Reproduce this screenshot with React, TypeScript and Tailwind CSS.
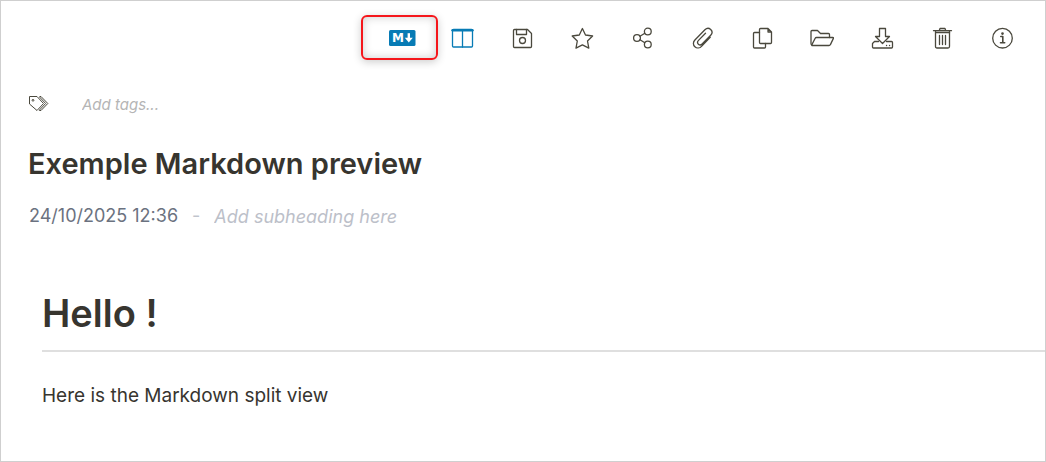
import type { ReactNode } from "react";

function Icon({ children }: { children: ReactNode }) {
  return (
    <svg
      viewBox="0 0 24 24"
      className="size-6"
      fill="none"
      stroke="currentColor"
      strokeWidth="1.3"
      strokeLinecap="round"
      strokeLinejoin="round"
      aria-hidden="true"
    >
      {children}
    </svg>
  );
}

const actions: { label: string; icon: ReactNode }[] = [
  {
    label: "Save",
    icon: (
      <Icon>
        <path d="M4.5 3.5H17.5L21.5 7.5V20.5Q21.5 21.5 20.5 21.5H4.5Q3.5 21.5 3.5 20.5V4.5Q3.5 3.5 4.5 3.5Z" />
        <path d="M6.5 3.5V8.5H16.5V3.5" />
        <circle cx="12.5" cy="14.5" r="3" />
      </Icon>
    ),
  },
  {
    label: "Favourite",
    icon: (
      <Icon>
        <path d="M12.4 2.5L15.5 9L22.6 10L17.5 15L18.8 22.1L12.4 18.9L6 22.1L7.3 15L2.2 10L9.3 9Z" />
      </Icon>
    ),
  },
  {
    label: "Share",
    icon: (
      <Icon>
        <circle cx="7" cy="12" r="3.4" />
        <circle cx="17.8" cy="5.5" r="3.4" />
        <circle cx="17.8" cy="18.5" r="3.4" />
        <path d="M10 10.3L14.8 7.3M10 13.7L14.8 16.7" />
      </Icon>
    ),
  },
  {
    label: "Attach a file",
    icon: (
      <Icon>
        <path d="M20.2 11.3L11.8 20.1C9.8 22.2 6.8 22.6 4.9 20.8C2.9 19 2.9 16.1 4.9 14L14.9 3.8C16.6 2.1 19.1 2 20.7 3.5C22.4 5.1 22.3 7.5 20.7 9.2L12.1 18C11 19.1 9.5 19.2 8.4 18.2C7.3 17.1 7.4 15.5 8.5 14.4L15.5 7.3" />
      </Icon>
    ),
  },
  {
    label: "Copy",
    icon: (
      <Icon>
        <path d="M18 2.5H10.5Q9.5 2.5 9.5 3.5V16.5Q9.5 17.5 10.5 17.5H20.5Q21.5 17.5 21.5 16.5V6L18 2.5V6H21.5" />
        <path d="M9.5 6.5H4.5Q3.5 6.5 3.5 7.5V21Q3.5 22 4.5 22H14.5Q15.5 22 15.5 21V17.5" />
      </Icon>
    ),
  },
  {
    label: "Open folder",
    icon: (
      <Icon>
        <path d="M1.7 18.8Q1 18.5 1 17.5V5.5Q1 4.5 2 4.5H7.5L10.5 7.5H18.5Q19.5 7.5 19.5 8.5V11.5" />
        <path d="M6.5 11.5H22.8Q23.8 11.5 23.4 12.4L20.4 18.6Q20 19.5 19 19.5H2.5Q1.5 19.5 1.9 18.6L5.2 12.3Q5.6 11.5 6.5 11.5Z" />
      </Icon>
    ),
  },
  {
    label: "Download",
    icon: (
      <Icon>
        <path d="M9.5 2.5H15.5V10.5H19.5L12.5 17.5L5.5 10.5H9.5Z" />
        <path d="M8.5 15.5H4.5L2.5 17.5V21Q2.5 22 3.5 22H21.5Q22.5 22 22.5 21V16.5Q22.5 15.5 21.5 15.5H16.5" />
        <path d="M16.5 19.5H16.6M19.5 19.5H19.6" />
      </Icon>
    ),
  },
  {
    label: "Delete",
    icon: (
      <Icon>
        <path d="M3.5 4.7H21.5M9.3 4.5L10 2.5H15L15.7 4.5M5.5 6.5H19.5V20.5Q19.5 22 18 22H7Q5.5 22 5.5 20.5V5" />
        <path d="M19.5 5V7M9.5 9.5V18.5M12.5 9.5V18.5M15.5 9.5V18.5" />
      </Icon>
    ),
  },
  {
    label: "Information",
    icon: (
      <Icon>
        <circle cx="12.5" cy="12.2" r="9.8" />
        <path d="M10.8 10.5H12.8V16.5M10.5 16.7H14.7" strokeWidth="1.6" />
        <circle cx="12.5" cy="7.6" r="0.7" fill="currentColor" />
      </Icon>
    ),
  },
];

export default function App() {
  return (
    <main className="flex min-h-screen flex-col border border-[#cfcfcf] bg-white font-['Inter',sans-serif] text-[#37352f]">
      <nav aria-label="Note actions" className="flex justify-end pt-[7px] pr-[13px]">
        <button
          type="button"
          aria-label="Markdown mode"
          className="relative flex h-15 w-15 items-center justify-center"
        >
          <span className="absolute -left-[11px] top-[7px] h-[45px] w-[77px] rounded-md border-2 border-[#f5161b] shadow-[inset_0_0_10px_rgba(0,0,0,0.2),0_2px_8px_rgba(0,0,0,0.2)]" />
          <svg viewBox="0 0 28 18" className="h-[18px] w-7" aria-hidden="true">
            <rect x="1" y="1" width="26.5" height="16" rx="1.5" fill="#077bb5" />
            <text
              x="10"
              y="13"
              textAnchor="middle"
              fill="white"
              className="font-['DejaVu_Sans',sans-serif] text-[12px] font-bold"
            >
              M
            </text>
            <path d="M20.8 4.2V11" stroke="white" strokeWidth="2.4" />
            <path d="M16.8 8.8L20.8 13.4L24.8 8.8Z" fill="white" />
          </svg>
        </button>
        <button
          type="button"
          aria-label="Split view"
          className="flex h-15 w-15 items-center justify-center text-[#077bb5]"
        >
          <Icon>
            <rect x="2.5" y="3.5" width="20" height="17.5" rx="1" />
            <path d="M2.5 4.3H22.5" strokeWidth="2.4" />
            <path d="M12.5 4V21" />
          </Icon>
        </button>
        {actions.map(({ label, icon }) => (
          <button
            key={label}
            type="button"
            aria-label={label}
            className="flex h-15 w-15 items-center justify-center text-[#4a483d]"
          >
            {icon}
          </button>
        ))}
      </nav>

      <label className="mt-5 flex items-center gap-8 pl-[27px] text-[#4a483d]">
        <svg
          viewBox="0 0 22 18"
          className="h-[18px] w-[22px]"
          fill="none"
          stroke="currentColor"
          strokeWidth="1"
          strokeLinejoin="round"
          aria-hidden="true"
        >
          <path d="M1.5 1.5H9L15.5 8.5L9 15.5L1.5 9Z" />
          <path d="M11.5 1.5H13L19.8 8.5L13 15.5H11.5L11 15" />
          <path d="M11.5 2L17.6 8.5L11.3 15.2" />
          <circle cx="5" cy="5.3" r="0.9" />
        </svg>
        <input
          aria-label="Tags"
          placeholder="Add tags..."
          className="h-8 w-60 bg-transparent text-[15px] italic outline-none placeholder:text-[#b5b5b5]"
        />
      </label>

      <h1 className="mt-[26px] pl-[27px] text-[29px] leading-9 font-semibold">
        Exemple Markdown preview
      </h1>

      <div className="mt-[18px] flex items-center pl-7 text-lg text-[#6b7280]">
        <time dateTime="2025-10-24T12:36">24/10/2025 12:36</time>
        <span className="px-[14px] text-[#c0c4cc]">-</span>
        <input
          aria-label="Subheading"
          placeholder="Add subheading here"
          className="h-8 min-w-0 flex-1 bg-transparent italic outline-none placeholder:text-[#bcc0c9]"
        />
      </div>

      <article className="mt-14 pl-[41px]">
        <h2 className="border-b-2 border-[#dfdfdf] pb-3 text-[38px] leading-[50px] font-semibold">
          Hello !
        </h2>
        <p className="mt-[30px] text-[19px] leading-7">
          Here is the Markdown split view
        </p>
      </article>
    </main>
  );
}
